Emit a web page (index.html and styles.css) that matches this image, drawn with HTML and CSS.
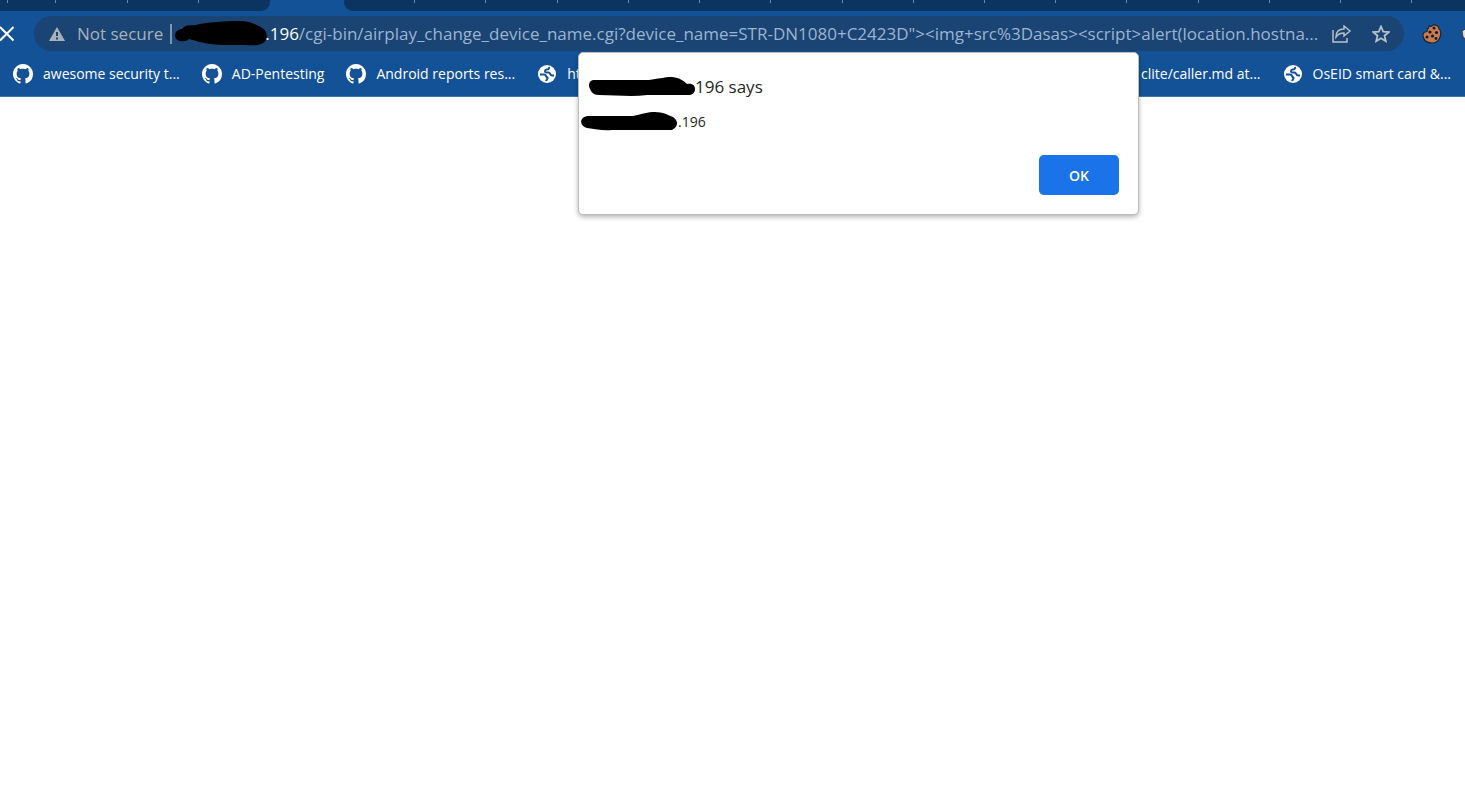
FILE: index.html
```
<!DOCTYPE html>
<html lang="en">
<head>
<meta charset="utf-8">
<title>Browser alert</title>
<link rel="stylesheet" href="styles.css">
</head>
<body>
<svg class="defs" aria-hidden="true">
  <symbol id="github" viewBox="0 0 16 16"><path fill="currentColor" d="M8 0C3.58 0 0 3.58 0 8c0 3.54 2.29 6.53 5.47 7.59.4.07.55-.17.55-.38 0-.19-.01-.82-.01-1.49-2.01.37-2.53-.49-2.69-.94-.09-.23-.48-.94-.82-1.13-.28-.15-.68-.52-.01-.53.63-.01 1.08.58 1.23.82.72 1.21 1.87.87 2.33.66.07-.52.28-.87.51-1.07-1.78-.2-3.64-.89-3.64-3.95 0-.87.31-1.59.82-2.15-.08-.2-.36-1.02.08-2.12 0 0 .67-.21 2.2.82.64-.18 1.32-.27 2-.27s1.36.09 2 .27c1.53-1.04 2.2-.82 2.2-.82.44 1.1.16 1.92.08 2.12.51.56.82 1.27.82 2.15 0 3.07-1.87 3.75-3.65 3.95.29.25.54.73.54 1.48 0 1.07-.01 1.93-.01 2.2 0 .21.15.46.55.38A8.01 8.01 0 0 0 16 8c0-4.42-3.58-8-8-8z"/></symbol>
  <symbol id="globe" viewBox="0 0 20 20"><circle cx="10" cy="10" r="9" fill="currentColor"/><path class="sea" d="M12 3C12.500 5 11 5.500 9.500 5.500 7.500 6 7.500 8.500 9.500 8.500H11.500C13.500 8.500 13 11.500 15 11.500H17M3 10.500H7C9.500 10.500 8.500 13 10.500 13.500 11 15 9.500 15.500 9 17"/></symbol>
</svg>
<header class="chrome">
  <div class="tabs" aria-hidden="true">
    <div class="tab-group tab-group-left"><i></i><i></i><i></i><i></i><i></i></div>
    <div class="tab-group tab-group-right"><i></i><i></i><i></i><i></i><i></i><i></i><i></i><i></i><i></i><i></i><i></i><i></i><i></i><i></i><i></i><i></i></div>
  </div>
  <div class="toolbar">
    <button class="icon-button stop" aria-label="Stop loading"><svg width="14" height="16" viewBox="0 0 14 16"><path d="M0 1 13.500 14.500M13.500 1 0 14.500" stroke="currentColor" stroke-width="2"/></svg></button>
    <div class="omnibox">
      <button class="security"><svg width="16" height="14" viewBox="0 0 16 14"><path d="M8 0 16 14H0z" fill="currentColor"/><path class="mark" d="M8 5v4M8 10.500v2"/></svg><span>Not secure</span></button>
      <span class="divider"></span>
      <svg class="host-mask" width="94" height="26" viewBox="0 0 94 26" aria-hidden="true"><path d="M1 15C1 10 5 8 8 8 11 3 17 5 21 4C35 1 52 0 65 0C76 0 83 4 88 7C95 11 94 21 87 23C82 25 77 24 71 24H50C37 24 25 21 15 18C12 21 2 22 1 15Z"/></svg>
      <label class="host" for="address">.196</label>
      <input id="address" type="text" value="/cgi-bin/airplay_change_device_name.cgi?device_name=STR-DN1080+C2423D&quot;&gt;&lt;img+src%3Dasas&gt;&lt;script&gt;alert(location.hostna...">
      <button class="icon-button" aria-label="Share"><svg width="20" height="18" viewBox="0 0 20 18"><path d="M1 5v12h14v-4M12 1l6 5-6 5V8C8 8 6 9 4 12 4 7 7 4 12 4z" fill="none" stroke="currentColor" stroke-width="1.500"/></svg></button>
      <button class="icon-button" aria-label="Bookmark this page"><svg width="18" height="18" viewBox="0 0 18 18"><path d="M9 1.500 11.200 6.600 16.700 7.100 12.500 10.700 13.800 16.200 9 13.300 4.200 16.200 5.500 10.700 1.300 7.100 6.800 6.600z" fill="none" stroke="currentColor" stroke-width="1.800"/></svg></button>
    </div>
    <button class="icon-button cookie" aria-label="Cookie editor"><svg width="20" height="20" viewBox="0 0 20 20"><path d="M7 1c1 2 2 2 4 0 4-.5 6 2 6 4 1 0 1 1 1.500 2 1 6-2 12-8.500 12C3 19 .5 14 1 10c1-1 1-2 2-2 2 0 3-1 2-3 2 0 2-2 2-4z" fill="#c67c51" stroke="#222632" stroke-width="1.200"/><g fill="#191a20"><circle cx="12" cy="4" r="1.500"/><circle cx="8" cy="8" r="1.600"/><circle cx="14.500" cy="8.500" r="1.600"/><circle cx="5" cy="13" r="1.500"/><circle cx="10.500" cy="12" r="1.600"/><circle cx="14" cy="14.500" r="1.400"/></g></svg></button>
    <button class="icon-button extension" aria-label="Extension"><svg width="20" height="20" viewBox="0 0 20 20"><path d="M0 7 5 4h8v13H6L1 13z" fill="#e9dfd1" stroke="#473a33"/></svg></button>
  </div>
  <nav class="bookmarks" aria-label="Bookmarks">
    <div class="bookmark-group">
      <a href="#"><svg><use href="#github"/></svg>awesome security t...</a>
      <a href="#"><svg><use href="#github"/></svg>AD-Pentesting</a>
      <a href="#"><svg><use href="#github"/></svg>Android reports res...</a>
      <a href="#"><svg><use href="#globe"/></svg>ht</a>
    </div>
    <div class="bookmark-group">
      <a href="#">clite/caller.md at...</a>
      <a href="#"><svg><use href="#globe"/></svg>OsEID smart card &amp;...</a>
    </div>
  </nav>
</header>
<dialog class="alert" open aria-labelledby="alert-title">
  <h1 id="alert-title"><svg width="106" height="20" viewBox="0 0 106 20" aria-hidden="true"><path d="M5 3H60C69 2 75 0 83 0 91 1 95 4 98 7 104 6 106 9 106 12 106 16 103 18 99 18H58C42 20 27 18 10 18 3 18 1 13 0 9 0 5 2 3 5 3Z"/></svg>196 says</h1>
  <p><svg width="97" height="20" viewBox="0 0 97 20" aria-hidden="true"><path d="M7 4H52C62 2 66 0 74 0 82 0 87 3 92 5 98 9 97 15 91 18H31C22 19 15 17 6 16-2 14-2 5 7 4Z"/></svg>.196</p>
  <form method="dialog"><button class="ok">OK</button></form>
</dialog>
</body>
</html>
```
FILE: styles.css
```
* { box-sizing: border-box; }
body { margin: 0; background: #fff; font-family: "Open Sans", "Noto Sans", sans-serif; overflow-x: hidden; }
button { border: 0; padding: 0; background: none; color: inherit; font: inherit; }
svg { display: block; flex: none; }
.defs { position: absolute; width: 0; height: 0; }
.chrome { background: #145297; border-bottom: 1px solid #3f72ad; overflow: hidden; }
.tabs { display: flex; height: 11px; gap: 74px; }
.tab-group { display: flex; background: #0b3461; }
.tab-group i { border-right: 1px solid #7189a5; height: 3px; flex: 1; }
.tab-group i:last-child { border: 0; }
.tab-group-left { width: 270px; border-bottom-right-radius: 9px; }
.tab-group-left i:first-child { flex: 0 0 8px; }
.tab-group-left i:nth-child(2) { flex: 0 0 48px; }
.tab-group-right { flex: 1; border-bottom-left-radius: 9px; }
.tab-group-right i { flex: 4; }
.tab-group-right i:last-child { flex: 3; }
.toolbar { display: flex; align-items: center; height: 45px; color: #fff; }
.icon-button { flex: none; }
.stop { width: 34px; }
.omnibox { display: flex; flex: 1; align-items: center; min-width: 0; height: 35px; padding: 0 14px 0 15px; border-radius: 18px; background: #194474; color: #a5b5c8; font-size: 17px; }
.security { display: flex; align-items: center; flex: none; gap: 12px; color: #a9b0b8; }
.security .mark { stroke: #194474; stroke-width: 2; }
.divider { flex: none; width: 2px; height: 20px; margin: 0 2px 0 7px; background: #8095ae; }
.host-mask { margin-right: -3px; }
.host { color: #fff; }
#address { flex: 1; min-width: 0; padding: 0; border: 0; outline: 0; background: none; color: #9db4d0; font: inherit; text-overflow: ellipsis; }
.omnibox .icon-button { margin-left: 4px; color: #b8c0c9; }
.omnibox .icon-button:last-child { margin-left: 20px; }
.cookie { margin-left: 18px; }
.extension { width: 3px; margin-left: 20px; overflow: hidden; }
.bookmarks { display: flex; justify-content: space-between; height: 40px; padding: 0 14px 5px 13px; }
.bookmark-group { display: flex; align-items: center; gap: 22px; }
.bookmarks a { display: flex; align-items: center; gap: 10px; color: #fff; font-size: 14px; text-decoration: none; white-space: nowrap; }
.bookmarks svg { width: 20px; height: 20px; }
.sea { fill: none; stroke: #145297; stroke-width: 2; }
.alert { position: absolute; top: 52px; left: 578px; width: 561px; margin: 0; padding: 21px 19px 19px 2px; border: 1px solid #b9bdbd; border-radius: 5px; background: #fff; box-shadow: 0 2px 5px #0000004d; color: #252629; }
.alert h1, .alert p { display: flex; align-items: center; margin: 0; }
.alert h1 { padding-left: 8px; font-size: 17px; font-weight: 400; line-height: 26px; }
.alert p { margin-top: 10px; font-size: 14px; line-height: 24px; }
.alert form { display: flex; justify-content: flex-end; margin-top: 21px; }
.ok { width: 80px; height: 40px; border-radius: 5px; background: #1a73e8; color: #fff; font-size: 14px; font-weight: 600; }
```
